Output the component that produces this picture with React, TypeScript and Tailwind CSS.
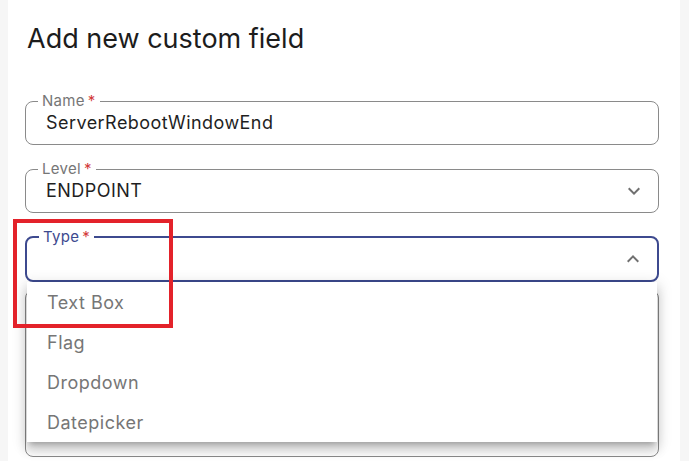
import React from 'react';

const ExpandIcon = ({ up = false }: { up?: boolean }) => (
  <svg width="24" height="24" viewBox="0 0 24 24" className={up ? 'rotate-180' : ''}>
    <path d="M16.59 8.59 12 13.17 7.41 8.59 6 10l6 6 6-6z" fill="#707070" />
  </svg>
);

const Field = ({
  label,
  value,
  focused = false,
  select = false,
  open = false,
}: {
  label: string;
  value?: string;
  focused?: boolean;
  select?: boolean;
  open?: boolean;
}) => (
  <fieldset
    className={`rounded-lg pl-3 pr-3 pb-[9px] ${
      focused ? 'border-2 border-[#3d4a8f]' : 'border border-[#8a8a8a]'
    }`}
  >
    <legend
      className={`px-1 text-[15px] leading-4 tracking-[0.3px] ${focused ? 'text-[#3d4a8f]' : 'text-[#767676]'}`}
    >
      {label}
      <span className="ml-[3px] text-[#d33a3a]">*</span>
    </legend>
    <div className="mt-0.5 flex h-6 items-center justify-between pl-2">
      <span className="text-[18px] leading-6 tracking-[0.45px] text-[#1f1f1f]">{value}</span>
      {select && <ExpandIcon up={open} />}
    </div>
  </fieldset>
);

const App = () => {
  const types = ['Text Box', 'Flag', 'Dropdown', 'Datepicker'];

  return (
    <div className="relative flex h-[461px] w-[689px] overflow-hidden bg-[#f6f6f6] font-['Inter',sans-serif]">
      <div className="ml-2 h-full w-[672px] bg-white pl-[17px] pr-[21px]">
        <h2 className="pl-0.5 pt-[23px] text-[27px] leading-8 text-[#1c1c1c]">Add new custom field</h2>

        <div className="mt-[38px] flex flex-col gap-4">
          <Field label="Name" value="ServerRebootWindowEnd" />
          <Field label="Level" value="ENDPOINT" select />

          <div className="relative">
            <Field label="Type" focused select open />

            {/* open menu */}
            <div className="absolute left-[2px] right-[2px] top-full z-10 bg-white shadow-[0_5px_5px_-3px_rgba(0,0,0,0.2),0_8px_10px_1px_rgba(0,0,0,0.14),0_3px_14px_2px_rgba(0,0,0,0.12)]">
              {types.map((t) => (
                <div key={t} className="flex h-10 items-center pl-5 text-[18px] tracking-[0.5px] text-[#767676]">
                  {t}
                </div>
              ))}
            </div>
          </div>

          <fieldset className="-mt-2 h-[167px] rounded-lg border border-[#8a8a8a]" />
        </div>
      </div>

      {/* annotation */}
      <div className="absolute left-[13px] top-[219px] z-20 h-[109px] w-[160px] border-4 border-[#e3222a]" />
    </div>
  );
};

export default App;
